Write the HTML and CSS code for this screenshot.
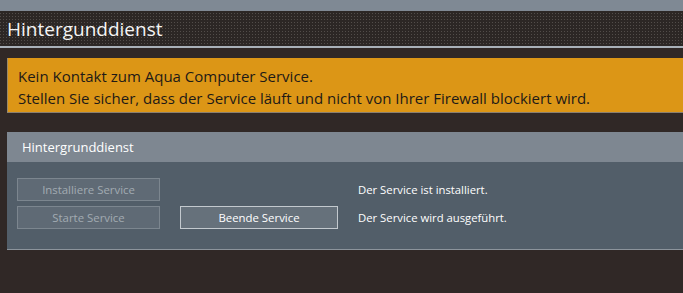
FILE: index.html
```html
<!DOCTYPE html>
<html lang="de">

<head>
    <meta charset="UTF-8">
    <meta name="viewport" content="width=device-width, initial-scale=1.0">
    <title>Hintergrunddienst</title>
    <link rel="stylesheet" href="styles.css">
</head>

<body>
    <div class="top-bar"></div>

    <div class="page-header">
        <h1 class="page-title">Hintergunddienst</h1>
    </div>
    <div class="header-line"></div>

    <div class="content">
        <div class="alert">
            <p>Kein Kontakt zum Aqua Computer Service.</p>
            <p>Stellen Sie sicher, dass der Service läuft und nicht von Ihrer Firewall blockiert wird.</p>
        </div>

        <div class="panel">
            <div class="panel-head">Hintergrunddienst</div>
            <div class="panel-body">
                <button type="button" class="service-button" disabled>Installiere Service</button>
                <span></span>
                <span class="status">Der Service ist installiert.</span>

                <button type="button" class="service-button" disabled>Starte Service</button>
                <button type="button" class="service-button">Beende Service</button>
                <span class="status">Der Service wird ausgeführt.</span>
            </div>
        </div>
    </div>
</body>

</html>
```

FILE: styles.css
```css
/* Basic reset */
* {
    margin: 0;
    padding: 0;
    box-sizing: border-box;
}

body {
    font-family: 'Open Sans', 'Noto Sans', sans-serif;
    background-color: #302826;
    color: #ffffff;
    height: 100vh;
    overflow: hidden;
}

.top-bar {
    height: 11px;
    background-color: #7f8994;
}

/* dotted strip behind the page title */
.page-header {
    height: 35px;
    background-color: #524d4a;
    background-image: linear-gradient(90deg, transparent 1px, #2c2725 1px),
        linear-gradient(0deg, transparent 1px, #2c2725 1px);
    background-size: 3px 3px;
    display: flex;
    align-items: center;
    padding-left: 7px;
}

.page-title {
    font-size: 19px;
    font-weight: 400;
    color: #f4f4f4;
    margin-top: 1px;
}

.header-line {
    height: 2px;
    background-color: #a9b1b9;
}

.content {
    padding: 10px 0 0 7px;
}

.alert {
    height: 55px;
    background-color: #dc9616;
    border-left: 1px solid #9a8a6a;
    border-bottom: 1px solid #8a8070;
    color: #1e1a16;
    font-size: 15px;
    line-height: 22px;
    padding: 7px 10px 0 10px;
}

.panel {
    margin-top: 19px;
    border-bottom: 1px solid #8c949c;
}

.panel-head {
    height: 30px;
    background-color: #7e8791;
    font-size: 13px;
    line-height: 30px;
    padding-left: 15px;
    color: #ffffff;
}

.panel-body {
    background-color: #525e69;
    display: grid;
    grid-template-columns: 143px 158px auto;
    column-gap: 20px;
    row-gap: 5px;
    align-items: center;
    padding: 16px 10px 20px 10px;
}

.service-button {
    height: 23px;
    background-color: #66717b;
    border: 1px solid #c3c9ce;
    color: #ffffff;
    font-family: inherit;
    font-size: 11.4px;
}

.service-button:disabled {
    background-color: #5f6a75;
    border-color: #7c868f;
    color: #a2aab2;
}

.status {
    font-size: 11.3px;
    color: #ffffff;
}
```
